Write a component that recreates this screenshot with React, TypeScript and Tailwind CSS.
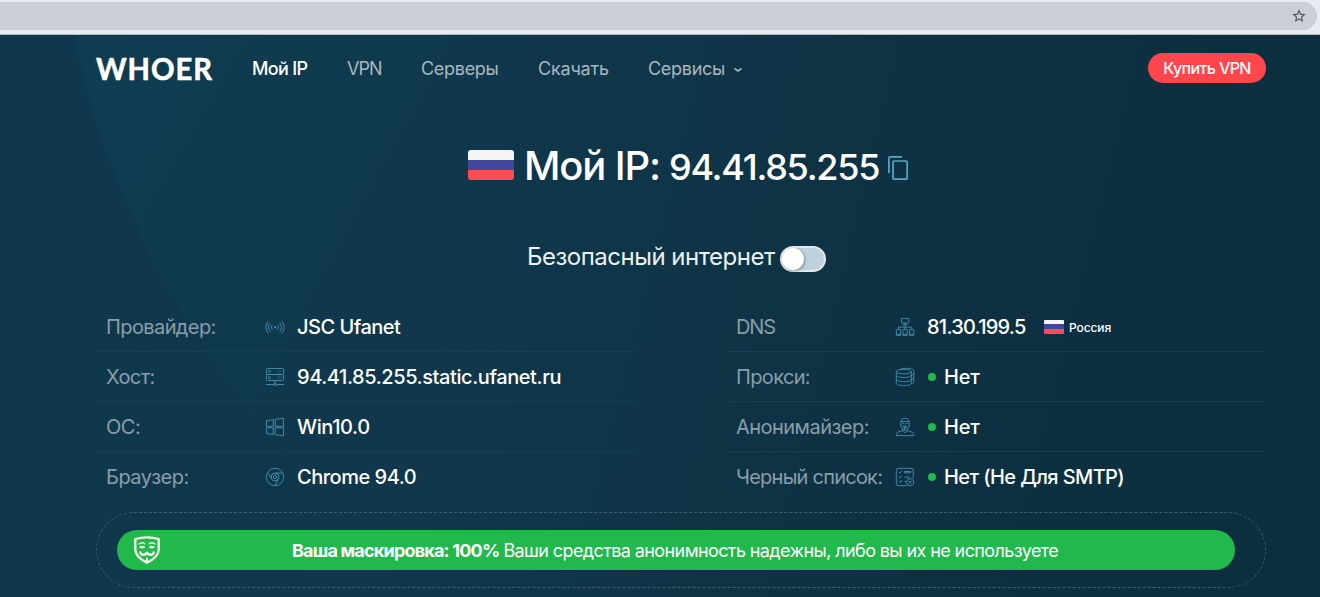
import type { ReactNode } from "react";
import { MdStarBorder } from "react-icons/md";

function Flag({ className }: { className: string }) {
  return (
    <span className={`flex shrink-0 flex-col overflow-hidden ${className}`}>
      <span className="flex-1 bg-[#f5f5f5]" />
      <span className="flex-1 bg-[#41479b]" />
      <span className="flex-1 bg-[#ff4b55]" />
    </span>
  );
}

function Icon({ children }: { children: ReactNode }) {
  return (
    <svg
      className="size-5 shrink-0 text-[#4a96b5]"
      viewBox="0 0 20 20"
      fill="none"
      stroke="currentColor"
      strokeWidth="0.85"
    >
      {children}
    </svg>
  );
}

const signal = (
  <Icon>
    <circle cx="10" cy="10.3" r="1.1" fill="currentColor" stroke="none" />
    <path d="M7.3 7.9a3.6 3.6 0 0 0 0 4.8M12.7 7.9a3.6 3.6 0 0 1 0 4.8M5.3 5.9a6.4 6.4 0 0 0 0 8.8M14.7 5.9a6.4 6.4 0 0 1 0 8.8M3.3 4.2a9 9 0 0 0 0 12.2M16.7 4.2a9 9 0 0 1 0 12.2" />
  </Icon>
);

const server = (
  <Icon>
    <rect x="1.4" y="1.5" width="17.2" height="6" rx="1.2" />
    <rect x="1.4" y="7.5" width="17.2" height="6" rx="1.2" />
    <circle cx="4.4" cy="4.5" r="1" />
    <circle cx="4.4" cy="10.5" r="1" />
    <path d="M12 4h5M12 5.3h4M12 10h5M12 11.3h4" strokeWidth="0.5" opacity="0.6" />
    <path d="M10 13.5v3M1 17.5h7.8M11.2 17.5H19" />
    <circle cx="10" cy="17.5" r="1.1" />
  </Icon>
);

const windows = (
  <Icon>
    <path d="M1.5 3.6 8.3 2.7V9.4H1.5zM10.2 2.4 18.5 1.3V9.4H10.2zM1.5 10.8H8.3V17.5L1.5 16.5zM10.2 10.8H18.5V18.8L10.2 17.7z" />
  </Icon>
);

const chrome = (
  <Icon>
    <circle cx="10" cy="10" r="8.7" />
    <circle cx="10" cy="10" r="3.9" />
    <circle cx="10" cy="10" r="1.7" />
    <path d="M10 6.1h7.8M6.6 11.9 2.6 5.4M13.4 11.9l-3.6 6.8" />
  </Icon>
);

const network = (
  <Icon>
    <rect x="6.4" y="1.4" width="7.4" height="4.6" rx="0.7" />
    <path d="M7.8 7.3h4.6M10.1 6v6.5M3.4 12.5v-2.4h13.4v2.4" />
    <rect x="1.3" y="12.6" width="4.4" height="6" rx="0.4" />
    <rect x="7.9" y="12.6" width="4.4" height="6" rx="0.4" />
    <rect x="14.5" y="12.6" width="4.4" height="6" rx="0.4" />
    <path d="M1.3 17.2h4.4M7.9 17.2h4.4M14.5 17.2h4.4" />
  </Icon>
);

const database = (
  <Icon>
    <ellipse cx="8.8" cy="4.6" rx="7.5" ry="2.3" />
    <path d="M1.3 4.6v11.6c0 1.4 3.3 2.5 7.5 2.5s7.5-1.1 7.5-2.5V4.6M1.3 8c0 1.4 3.3 2.5 7.5 2.5s7.5-1.1 7.5-2.5M1.3 12.2c0 1.4 3.3 2.5 7.5 2.5s7.5-1.1 7.5-2.5" />
    <path d="M5 2.6c1.6-.9 4-1.3 6.6-1.3 4 0 7.2 1 7.2 2.3v11c0 1-1 1.7-2.5 2.1M16.3 8.3c1.5-.4 2.5-1 2.5-1.8M16.3 12.5c1.5-.4 2.5-1 2.5-1.8" />
  </Icon>
);

const anonymous = (
  <Icon>
    <path d="M5.8 5.6C5.8 2.9 7.6 1.2 10 1.2s4.2 1.7 4.2 4.4v3.4c0 2-1.9 3.6-4.2 4.3-2.3-.7-4.2-2.3-4.2-4.3z" />
    <path d="M5.8 4.5h8.4M7.2 6.2l2.2.8M12.8 6.2l-2.2.8M7.6 9.6 10 9l2.4.6M8.3 10.9h3.4M10 9v4" />
    <path d="M7.4 12.4v1.4l2.6 1.9 2.6-1.9v-1.4M7.4 13.6l-4 1.3c-1.4.5-2.2 1.7-2.2 3.7h17.6c0-2-.8-3.2-2.2-3.7l-4-1.3" />
  </Icon>
);

const checklist = (
  <Icon>
    <path d="M18.3 11V3.8a2.5 2.5 0 0 0-2.5-2.5H3.8a2.5 2.5 0 0 0-2.5 2.5v12.4a2.5 2.5 0 0 0 2.5 2.5h8" />
    <path d="m3.8 4.9 1.2 1.2 2-2.4M3.8 9.5 5 10.7l2-2.4M3.8 14.2 5 15.4l2-2.4M9.4 4.5h6.3v1.3H9.4zM9.4 10.2h5M9.4 14.5h1.7" />
    <circle cx="15.2" cy="15.2" r="3.6" />
    <path d="m13.8 13.8 2.8 2.8M16.6 13.8l-2.8 2.8" />
  </Icon>
);

function Mask() {
  return (
    <svg
      className="h-7 w-[26px] shrink-0"
      viewBox="0 0 26 28"
      fill="none"
      stroke="#f8fdec"
      strokeLinecap="round"
      strokeLinejoin="round"
    >
      <path d="M1.3 3C5 1.8 9 1.3 13 1.3s8 .5 11.7 1.7v10.6c0 5.4-4.8 9.8-11.7 13-6.9-3.2-11.7-7.6-11.7-13z" strokeWidth="2.3" />
      <path d="M5 8c1.5-1.4 4-1.5 5.8-.2M21 8c-1.5-1.4-4-1.5-5.8-.2" strokeWidth="1.4" />
      <path d="M5.8 11.2c1.3-.9 3.5-.9 4.8 0-1.3.7-3.5.7-4.8 0zM15.4 11.2c1.3-.9 3.5-.9 4.8 0-1.3.7-3.5.7-4.8 0z" strokeWidth="1.2" fill="#f8fdec" />
      <path d="M6.3 16.5c.5 2.7 4.6 3.2 6.7.2 2.1 3 6.2 2.5 6.7-.2" strokeWidth="2.4" />
      <path d="M13 22.5V26" strokeWidth="2" />
    </svg>
  );
}

function Row({ label, icon, children }: { label: ReactNode; icon: ReactNode; children: ReactNode }) {
  return (
    <div className="flex h-[50px] items-center border-b border-[#183e51] pl-2.5 text-xl last:border-transparent">
      <span className="w-[159px] shrink-0 whitespace-nowrap text-[#8a9ea8]">{label}</span>
      {icon}
      <span className="ml-3 flex items-center whitespace-nowrap font-medium text-white">{children}</span>
    </div>
  );
}

function Dot() {
  return <span className="mr-2 ml-px size-2 rounded-full bg-[#21b84c]" />;
}

export default function App() {
  return (
    <div className="flex h-[597px] w-full flex-col overflow-hidden font-['Inter',sans-serif]">
      <div className="flex h-[35px] shrink-0 border-b border-[#b5bac1] bg-[#e8ebf2] pt-0.5 pb-1">
        <div className="mr-[3px] flex flex-1 items-center justify-end rounded-r-full bg-[#cbced7] pr-2.5">
          <MdStarBorder className="size-4 text-[#4d4f54]" />
        </div>
      </div>

      <div className="relative isolate flex flex-1 flex-col bg-[linear-gradient(104deg,#0f384c_0%,#10374b_35%,#0d3142_70%,#0c2e3e_100%)] pr-[54px] pl-24">
        <svg className="absolute inset-0 -z-10 size-full" viewBox="0 35 1320 562" preserveAspectRatio="none">
          <defs>
            <linearGradient id="glow" gradientUnits="userSpaceOnUse" x1="80" y1="100" x2="420" y2="300">
              <stop offset="0" stopColor="#0f4458" stopOpacity="0.38" />
              <stop offset="0.5" stopColor="#0e4254" stopOpacity="0.27" />
              <stop offset="1" stopColor="#0e4254" stopOpacity="0" />
            </linearGradient>
          </defs>
          <circle cx="951" cy="-151" r="897" fill="url(#glow)" />
        </svg>

        <header className="flex h-[66px] items-center text-lg text-[#a9b8c0]">
          <span className="mt-px w-[156px] origin-left scale-x-[0.94] font-['Lato'] text-[31px] leading-none font-bold tracking-[1px] text-white [-webkit-text-stroke:0.6px_white]">
            WHOER
          </span>
          <nav className="mt-px flex items-center whitespace-nowrap">
            <span className="w-[95px] font-medium tracking-[-0.65px] text-white">Мой IP</span>
            <span className="w-[74px] tracking-[-0.9px]">VPN</span>
            <span className="w-[117px] tracking-[-0.3px]">Серверы</span>
            <span className="w-[110px] tracking-[-0.2px]">Скачать</span>
            <span className="tracking-[-0.3px]">Сервисы</span>
            <svg className="mt-0.5 ml-2 h-2 w-2.5" viewBox="0 0 10 8" fill="none" stroke="currentColor" strokeWidth="1.6">
              <path d="m1.5 2.5 3.5 2.5 3.5-2.5" />
            </svg>
          </nav>
          <button className="ml-auto h-[30px] w-[118px] rounded-full bg-[#ff464c] text-base font-medium tracking-[-0.6px] text-white">
            Купить VPN
          </button>
        </header>

        <h1 className="mt-[35px] ml-[372px] flex h-[60px] items-baseline whitespace-nowrap font-medium text-white">
          <Flag className="mt-[14px] h-[30px] w-[46px] self-start rounded-[3px]" />
          <span className="ml-2.5 w-[145px] text-[40px] leading-[60px] tracking-[-1.15px]">Мой IP:</span>
          <span className="text-[36px] leading-[60px] tracking-[-1.25px]">94.41.85.255</span>
          <svg className="ml-[9px] h-6 w-5" viewBox="0 0 20 24" fill="none" stroke="#5aa7c6" strokeWidth="1.7">
            <rect x="5" y="5" width="14.2" height="18.2" rx="1.3" />
            <path d="M.9 17V2.2C.9 1.4 1.4.9 2.2.9H14" />
          </svg>
        </h1>

        <div className="mt-[41px] ml-[431px] flex h-10 items-center text-2xl text-[#eef1f3]">
          <span className="w-[253px] whitespace-nowrap tracking-[-0.5px]">Безопасный интернет</span>
          <span className="mt-1 flex h-[26px] w-[46px] items-center rounded-full border-2 border-[#e5e7e8] bg-[#bdd2dc]">
            <span className="size-[22px] rounded-full bg-white shadow-[1px_1px_3px_rgba(0,0,0,0.35)]" />
          </span>
        </div>

        <div className="mt-[25px] grid grid-cols-2 gap-[90px]">
          <div>
            <Row label={<span className="tracking-[-0.6px]">Провайдер:</span>} icon={signal}>
              <span className="tracking-[-0.5px]">JSC Ufanet</span>
            </Row>
            <Row label={<span className="tracking-[-0.6px]">Хост:</span>} icon={server}>
              <span className="tracking-[-0.42px]">94.41.85.255.static.ufanet.ru</span>
            </Row>
            <Row label={<span className="tracking-[-0.5px]">ОС:</span>} icon={windows}>
              <span className="tracking-[-0.4px]">Win10.0</span>
            </Row>
            <Row label={<span className="tracking-[-0.5px]">Браузер:</span>} icon={chrome}>
              <span className="tracking-[-0.48px]">Chrome 94.0</span>
            </Row>
          </div>
          <div>
            <Row label={<span className="tracking-[-1.1px]">DNS</span>} icon={network}>
              <span className="w-[117px] tracking-[-0.75px]">81.30.199.5</span>
              <Flag className="h-3.5 w-5 rounded-[1px]" />
              <span className="mt-[3px] ml-[5px] text-xs tracking-[-0.1px]">Россия</span>
            </Row>
            <Row label={<span className="tracking-[-0.65px]">Прокси:</span>} icon={database}>
              <Dot />
              <span className="tracking-[-0.2px]">Нет</span>
            </Row>
            <Row label={<span className="tracking-[-0.53px]">Анонимайзер:</span>} icon={anonymous}>
              <Dot />
              <span className="tracking-[-0.2px]">Нет</span>
            </Row>
            <Row label={<span className="tracking-[-0.77px]">Черный список:</span>} icon={checklist}>
              <Dot />
              <span className="tracking-[-0.61px]">Нет (Не Для SMTP)</span>
            </Row>
          </div>
        </div>

        <div className="mt-[10px] h-[76px] rounded-full border border-dashed border-[#3c6070] py-[17px] pr-[30px] pl-5">
          <div className="flex h-10 items-center rounded-full bg-[#21b84c] pl-[17px] text-lg whitespace-nowrap text-white">
            <Mask />
            <span className="mt-0.5 ml-[132px] font-bold tracking-[-0.8px]">Ваша маскировка: 100%</span>
            <span className="mt-0.5 ml-1 tracking-[-0.6px]">Ваши средства анонимность надежны, либо вы их не используете</span>
          </div>
        </div>
      </div>
    </div>
  );
}
